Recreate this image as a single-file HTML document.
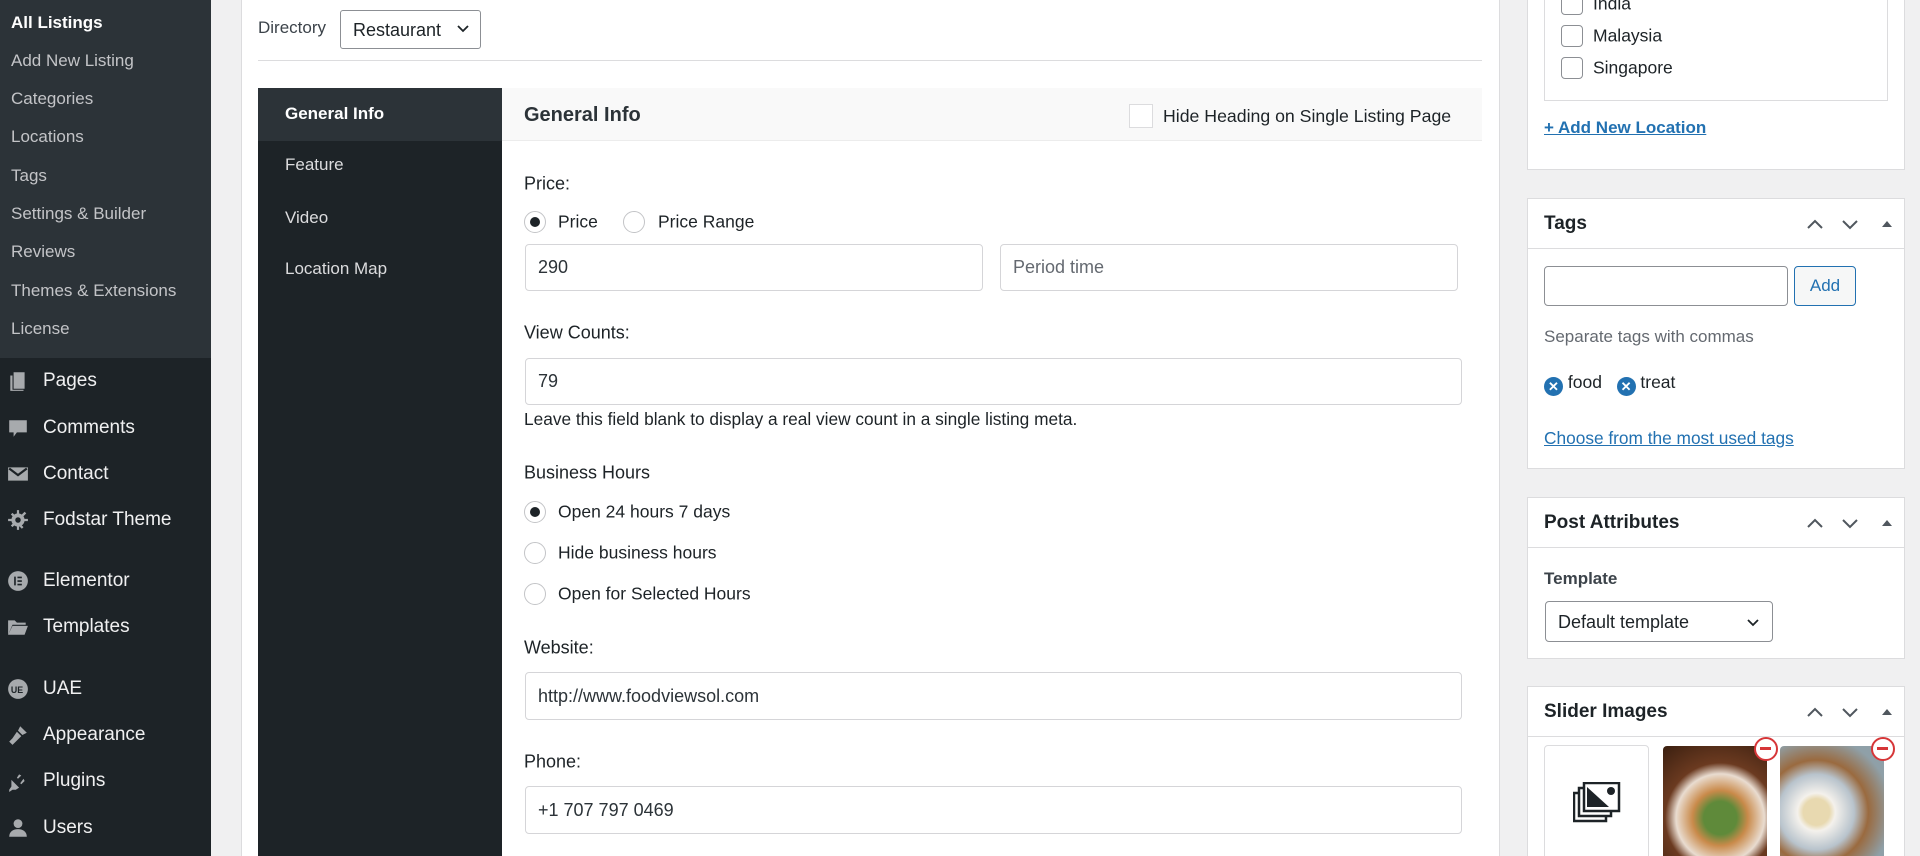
<!DOCTYPE html>
<html style="overflow:hidden;width:1920px;height:856px"><head><meta charset="utf-8"><style>
*{box-sizing:border-box;margin:0;padding:0}
body{width:1920px;height:856px;overflow:hidden;background:#f0f0f1;font-family:"Liberation Sans",sans-serif;color:#1d2327;position:relative}
.a{position:absolute;white-space:nowrap}
#side{position:absolute;left:0;top:0;width:211px;height:856px;background:#1d2327}
#sub{position:absolute;left:0;top:0;width:211px;height:358px;background:#2c3338}
.si{position:absolute;left:11px;font-size:17px;color:#c3c4c7;transform:translateY(-50%)}
.mi{position:absolute;left:43px;font-size:19px;color:#f0f0f1;transform:translateY(-50%)}
.ic{position:absolute;left:7px;width:22px;height:22px;transform:translateY(-50%);fill:#a7aaad}
.box{position:absolute;background:#fff;border:1px solid #dcdcde}
.lbl{position:absolute;left:524px;font-size:18px;color:#1d2327;transform:translateY(-50%)}
.inp{position:absolute;background:#fff;border:1px solid #d5d5d8;border-radius:4px;font-size:18px;padding-left:12px;display:flex;align-items:center;color:#2c3338}
.rad{position:absolute;width:22px;height:22px;border:1px solid #c3c4c7;border-radius:50%;background:#fff;transform:translateY(-50%)}
.rad.on::after{content:"";position:absolute;left:5px;top:5px;width:10px;height:10px;border-radius:50%;background:#1d2327}
.rt{position:absolute;font-size:17.5px;transform:translateY(-50%)}
.ph{position:absolute;height:50px;border-bottom:1px solid #dcdcde;left:0;right:0;top:0}
.ph b{position:absolute;left:16px;top:50%;transform:translateY(-50%);font-size:19px}
.arr{position:absolute;top:50%;transform:translateY(-50%)}
.cb{position:absolute;width:22px;height:22px;border:1px solid #8c8f94;border-radius:4px;background:#fff;transform:translateY(-50%)}
.lk{color:#2271b1;text-decoration:underline}
.x{display:inline-block;width:19px;height:19px;border-radius:50%;background:#2271b1;color:#fff;font-size:13px;line-height:19px;text-align:center;font-weight:bold;vertical-align:-3px}
</style></head><body>
<div id="side"><div id="sub"></div>
<div class="si" style="top:23px;color:#fff;font-weight:bold">All Listings</div>
<div class="si" style="top:61px">Add New Listing</div>
<div class="si" style="top:99px">Categories</div>
<div class="si" style="top:137px">Locations</div>
<div class="si" style="top:176px">Tags</div>
<div class="si" style="top:214px">Settings &amp; Builder</div>
<div class="si" style="top:252px">Reviews</div>
<div class="si" style="top:291px">Themes &amp; Extensions</div>
<div class="si" style="top:329px">License</div>

<svg class="ic" style="top:381px" viewBox="0 0 20 20"><path d="M6 2h10v15H6z M3 5h2v13h10v1H3z"/></svg>
<div class="mi" style="top:381px">Pages</div>
<svg class="ic" style="top:428px" viewBox="0 0 20 20"><path d="M2 3h16v11H9l-3 4v-4H2z"/></svg>
<div class="mi" style="top:428px">Comments</div>
<svg class="ic" style="top:474px" viewBox="0 0 20 20"><path d="M1 4h18v12H1z" /><path d="M2 5l8 6 8-6" stroke="#1d2327" stroke-width="2" fill="none"/></svg>
<div class="mi" style="top:474px">Contact</div>
<svg class="ic" style="top:520px" viewBox="0 0 20 20"><circle cx="10" cy="10" r="6"/><path d="M9 1h2v4H9zM9 15h2v4H9zM1 9h4v2H1zM15 9h4v2h-4zM3.5 5l1.5-1.5 3 3-1.5 1.5zM15 16.5l-1.5 1.5-3-3 1.5-1.5zM3.5 15l3-3 1.5 1.5-3 3zM13 5.5l3-3 1.5 1.5-3 3z"/><circle cx="10" cy="10" r="2.5" fill="#1d2327"/></svg>
<div class="mi" style="top:520px">Fodstar Theme</div>
<svg class="ic" style="top:581px" viewBox="0 0 20 20"><circle cx="10" cy="10" r="9"/><path d="M6.5 6h1.5v8H6.5zM9.5 6h4v1.5h-4zM9.5 9.3h4v1.5h-4zM9.5 12.5h4V14h-4z" fill="#1d2327"/></svg>
<div class="mi" style="top:581px">Elementor</div>
<svg class="ic" style="top:627px" viewBox="0 0 20 20"><path d="M1 4h6l2 2h8v2H5l-4 9z M5 9h14l-3 8H1z"/></svg>
<div class="mi" style="top:627px">Templates</div>
<svg class="ic" style="top:689px" viewBox="0 0 20 20"><circle cx="10" cy="10" r="9"/><text x="3.5" y="13.5" font-size="8" font-weight="bold" fill="#1d2327" font-family="Liberation Sans">UE</text></svg>
<div class="mi" style="top:689px">UAE</div>
<svg class="ic" style="top:735px" viewBox="0 0 20 20"><path d="M12 2l6 6-4 2-4-4z M9 7l4 4-5 5-3 3-3-3 3-3z"/></svg>
<div class="mi" style="top:735px">Appearance</div>
<svg class="ic" style="top:781px" viewBox="0 0 20 20"><path d="M4 9l7 7-3 2H5l-3 2 0-2 2-3V12z M11 4l2 1-3 3-1-1z M15 8l1 2-3 3-1-1z"/></svg>
<div class="mi" style="top:781px">Plugins</div>
<svg class="ic" style="top:828px" viewBox="0 0 20 20"><circle cx="10" cy="6" r="4"/><path d="M2 18c0-5 4-7 8-7s8 2 8 7z"/></svg>
<div class="mi" style="top:828px">Users</div>
</div>

<div class="box" style="left:241px;top:-2px;width:1259px;height:858px;border-bottom:none"></div>
<div class="a" style="left:258px;top:18px;font-size:17px;color:#3c434a">Directory</div>
<div class="a" style="left:340px;top:10px;width:141px;height:39px;border:1px solid #8c8f94;border-radius:3px;background:#fff;font-size:18px;padding:9px 0 0 12px">Restaurant <span style="position:absolute;right:10px;top:8px"><svg width="14" height="14" viewBox="0 0 14 14"><path d="M2 5l5 5 5-5" stroke="#1d2327" stroke-width="1.8" fill="none"/></svg></span></div>
<div class="a" style="left:258px;top:60px;width:1224px;height:1px;background:#dcdcde"></div>

<div class="a" style="left:258px;top:88px;width:244px;height:768px;background:#1d2327"></div>
<div class="a" style="left:258px;top:88px;width:244px;height:53px;background:#2c3338"></div>
<div class="a" style="left:285px;top:104px;font-size:17px;color:#fff;font-weight:bold">General Info</div>
<div class="a" style="left:285px;top:155px;font-size:17px;color:#dcdcde">Feature</div>
<div class="a" style="left:285px;top:208px;font-size:17px;color:#dcdcde">Video</div>
<div class="a" style="left:285px;top:259px;font-size:17px;color:#dcdcde">Location Map</div>

<div class="a" style="left:502px;top:88px;width:980px;height:53px;background:#f9f9f9;border-bottom:1px solid #ececec"></div>
<div class="a" style="left:524px;top:104px;font-size:20px;font-weight:bold;color:#2c3338">General Info</div>
<div class="a" style="left:1129px;top:104px;width:24px;height:24px;border:1px solid #dcdcde;background:#fff"></div>
<div class="a" style="left:1163px;top:106px;font-size:17.7px">Hide Heading on Single Listing Page</div>

<div class="lbl" style="top:184px">Price:</div>
<div class="rad on" style="left:524px;top:222px"></div><div class="rt" style="left:558px;top:222px">Price</div>
<div class="rad" style="left:623px;top:222px"></div><div class="rt" style="left:658px;top:222px">Price Range</div>
<div class="inp" style="left:525px;top:244px;width:458px;height:47px">290</div>
<div class="inp" style="left:1000px;top:244px;width:458px;height:47px;color:#646970">Period time</div>

<div class="lbl" style="top:333px">View Counts:</div>
<div class="inp" style="left:525px;top:358px;width:937px;height:47px">79</div>
<div class="a" style="left:524px;top:409px;font-size:17.3px">Leave this field blank to display a real view count in a single listing meta.</div>

<div class="lbl" style="top:473px">Business Hours</div>
<div class="rad on" style="left:524px;top:512px"></div><div class="rt" style="left:558px;top:512px">Open 24 hours 7 days</div>
<div class="rad" style="left:524px;top:553px"></div><div class="rt" style="left:558px;top:553px">Hide business hours</div>
<div class="rad" style="left:524px;top:594px"></div><div class="rt" style="left:558px;top:594px">Open for Selected Hours</div>

<div class="lbl" style="top:648px">Website:</div>
<div class="inp" style="left:525px;top:672px;width:937px;height:48px">http://www.foodviewsol.com</div>
<div class="lbl" style="top:762px">Phone:</div>
<div class="inp" style="left:525px;top:786px;width:937px;height:48px">+1 707 797 0469</div>

<div class="box" style="left:1527px;top:-2px;width:378px;height:172px"></div>
<div class="a" style="left:1544px;top:-2px;width:344px;height:103px;border:1px solid #dcdcde;background:#fff"></div>
<div class="cb" style="left:1561px;top:4px"></div><div class="rt" style="left:1593px;top:4px">India</div>
<div class="cb" style="left:1561px;top:36px"></div><div class="rt" style="left:1593px;top:36px">Malaysia</div>
<div class="cb" style="left:1561px;top:68px"></div><div class="rt" style="left:1593px;top:68px">Singapore</div>
<div class="a lk" style="left:1544px;top:118px;font-size:17px;font-weight:bold">+ Add New Location</div>

<svg width="0" height="0" style="position:absolute"><defs>
<g id="arrs"><path d="M2 12l7-7 7 7" stroke="#50575e" stroke-width="2" fill="none"/><path d="M37 5l7 7 7-7" stroke="#50575e" stroke-width="2" fill="none"/><path d="M76 11l5-6 5 6z" fill="#50575e"/></g></defs></svg>

<div class="box" style="left:1527px;top:198px;width:378px;height:271px">
<div class="ph"><b>Tags</b><svg class="arr" style="left:278px" width="90" height="16"><use href="#arrs"/></svg></div>
<div class="a" style="left:16px;top:67px;width:244px;height:40px;border:1px solid #8c8f94;border-radius:4px"></div>
<div class="a" style="left:266px;top:67px;width:62px;height:40px;border:1px solid #2271b1;border-radius:4px;background:#f6f7f7;color:#2271b1;font-size:17px;text-align:center;line-height:38px">Add</div>
<div class="a" style="left:16px;top:128px;font-size:17px;color:#646970">Separate tags with commas</div>
<div class="a" style="left:16px;top:173px;font-size:17.5px"><span class="x">✕</span> food &nbsp;&nbsp;<span class="x">✕</span> treat</div>
<div class="a lk" style="left:16px;top:229px;font-size:17.3px">Choose from the most used tags</div>
</div>

<div class="box" style="left:1527px;top:497px;width:378px;height:162px">
<div class="ph"><b>Post Attributes</b><svg class="arr" style="left:278px" width="90" height="16"><use href="#arrs"/></svg></div>
<div class="a" style="left:16px;top:71px;font-size:17px;font-weight:bold;color:#3c434a">Template</div>
<div class="a" style="left:17px;top:103px;width:228px;height:41px;border:1px solid #8c8f94;border-radius:4px;font-size:18px;padding:10px 0 0 12px">Default template<svg style="position:absolute;right:12px;top:13px" width="14" height="14" viewBox="0 0 14 14"><path d="M2 5l5 5 5-5" stroke="#1d2327" stroke-width="1.8" fill="none"/></svg></div>
</div>

<div class="box" style="left:1527px;top:686px;width:378px;height:170px;border-bottom:none">
<div class="ph"><b>Slider Images</b><svg class="arr" style="left:278px" width="90" height="16"><use href="#arrs"/></svg></div>
<div class="a" style="left:16px;top:58px;width:105px;height:120px;border:1px solid #dcdcde;border-radius:4px">
<svg style="position:absolute;left:28px;top:36px" width="48" height="42" viewBox="0 0 48 42"><rect x="1" y="11" width="32" height="28" fill="none" stroke="#1d2327" stroke-width="2.5"/><rect x="6" y="6" width="32" height="28" fill="#fff" stroke="#1d2327" stroke-width="2.5"/><rect x="11" y="1" width="35" height="28" fill="#fff" stroke="#1d2327" stroke-width="2.5"/><path d="M14 5l22 20H14z" fill="#1d2327"/><circle cx="38" cy="9" r="4" fill="#1d2327"/></svg></div>
<div class="a" style="left:135px;top:59px;width:104px;height:120px;border-radius:4px;background:radial-gradient(circle at 55% 60%,#5f8a3a 0 18%,#c98a4a 30%,#e9dcd0 48%,#6b3a20 60%,#3a1f10 100%)"></div>
<div class="a" style="left:252px;top:59px;width:104px;height:120px;border-radius:4px;background:radial-gradient(circle at 35% 55%,#e8d9b0 0 14%,#f4f1ec 20%,#b8c3cc 40%,#9a6a3f 55%,#8fa0a8 80%)"></div>
<div class="a" style="left:226px;top:50px;width:24px;height:24px;border:2.5px solid #d63638;border-radius:50%;background:#fff"><div style="position:absolute;left:4px;top:8px;width:11px;height:3px;background:#d63638"></div></div>
<div class="a" style="left:343px;top:50px;width:24px;height:24px;border:2.5px solid #d63638;border-radius:50%;background:#fff"><div style="position:absolute;left:4px;top:8px;width:11px;height:3px;background:#d63638"></div></div>
</div>
</body></html>
